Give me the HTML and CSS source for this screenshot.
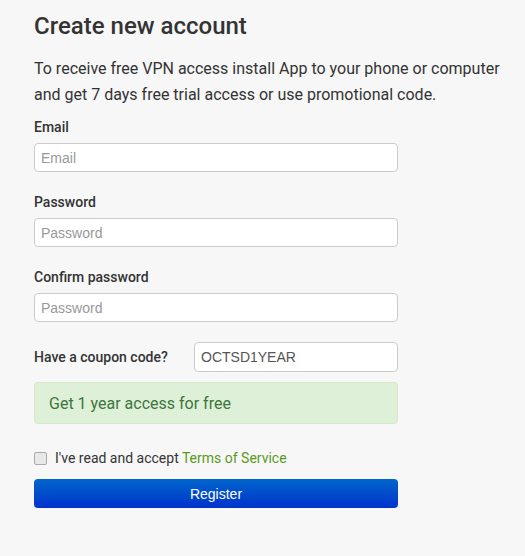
FILE: index.html
```html
<!DOCTYPE html>
<html>
<head>
<meta charset="utf-8">
<link rel="stylesheet" href="styles.css">
</head>
<body>
<div class="page">
  <h1 class="title">Create new account</h1>
  <p class="intro">To receive free VPN access install App to your phone or computer and get 7 days free trial access or use promotional code.</p>
  <form class="form">
    <div class="group">
      <label class="label">Email</label>
      <input class="input" type="text" placeholder="Email">
    </div>
    <div class="group">
      <label class="label">Password</label>
      <input class="input" type="password" placeholder="Password">
    </div>
    <div class="group">
      <label class="label">Confirm password</label>
      <input class="input" type="password" placeholder="Password">
    </div>
    <div class="coupon">
      <label class="label coupon-label">Have a coupon code?</label>
      <input class="input coupon-input" type="text" value="OCTSD1YEAR">
    </div>
    <div class="alert">Get 1 year access for free</div>
    <div class="terms">
      <span class="checkbox"></span>
      <span>I've read and accept <a class="link" href="#">Terms of Service</a></span>
    </div>
    <button class="btn" type="button">Register</button>
  </form>
</div>
</body>
</html>
```
FILE: styles.css
```css
* { box-sizing: border-box; }
html, body { margin: 0; padding: 0; background: #f7f7f7; }
body { font-family: Roboto, "Liberation Sans", Arial, sans-serif; color: #333; }
.page { width: 364px; margin-left: 34px; padding-top: 11px; }
.title { font-size: 24px; font-weight: 500; margin: 0; line-height: 30px; color: #333; }
.intro { font-size: 16px; line-height: 26px; margin: 15px 0 0; width: 480px; color: #333; }
.form { margin-top: 9px; }
.group { margin-bottom: 20px; }
.label { display: block; font-size: 14px; font-weight: 500; line-height: 20px; margin-bottom: 6px; color: #333; }
.input { display: block; width: 364px; height: 29px; border: 1px solid #ccc; border-radius: 4px; background: #fff; padding: 0 6px; font-family: "Liberation Sans", Arial, sans-serif; font-size: 14px; color: #555; outline: none; }
.input::placeholder { color: #999; }
.coupon { display: flex; align-items: center; margin-top: 4px; }
.coupon-label { width: 160px; margin: 0; }
.coupon-input { width: 204px; height: 30px; font-size: 14px; }
.alert { margin-top: 10px; height: 42px; background: #dff0d8; border: 1px solid #d6e9c6; border-radius: 4px; color: #3c763d; font-size: 16px; display: flex; align-items: center; padding: 0 14px; }
.terms { display: flex; align-items: center; margin-top: 26px; font-size: 14px; color: #333; }
.checkbox { width: 13px; height: 13px; border: 1px solid #aaa; border-radius: 2px; background: #e8e8e8; margin-right: 8px; }
.link { color: #5a9a1a; text-decoration: none; }
.btn { display: block; margin-top: 13px; width: 364px; height: 29px; border: none; border-radius: 4px; background: linear-gradient(#0066cc, #0033cc); color: #fff; font-family: "Liberation Sans", Arial, sans-serif; font-size: 14px; cursor: pointer; }
```
